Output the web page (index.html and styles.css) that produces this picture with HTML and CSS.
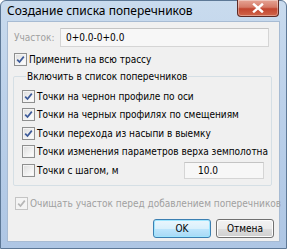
FILE: index.html
```html
<!DOCTYPE html>
<html lang="ru">
<head>
<meta charset="utf-8">
<title>Создание списка поперечников</title>
<link rel="stylesheet" href="styles.css">
</head>
<body>
<div class="window">
  <div class="titlebar">
    <span class="title">Создание списка поперечников</span>
    <div class="close">
      <svg width="12" height="10" viewBox="0 0 12 10"><path d="M2 1.5 L10 8.5 M10 1.5 L2 8.5" stroke="#fff" stroke-width="2.4" stroke-linecap="square"/></svg>
    </div>
  </div>
  <div class="client">
    <div class="field-row">
      <span class="field-label">Участок:</span>
      <div class="textbox wide">0+0.0-0+0.0</div>
    </div>
    <div class="check top-check">
      <span class="box checked"><svg width="9" height="9" viewBox="0 0 9 9"><path d="M1.2 4.6 L3.5 7 L7.8 1.6" fill="none" stroke="#3c5a99" stroke-width="1.7"/></svg></span>
      <span>Применить на всю трассу</span>
    </div>
    <fieldset class="group">
      <legend>Включить в список поперечников</legend>
      <div class="check item">
        <span class="box checked"><svg width="9" height="9" viewBox="0 0 9 9"><path d="M1.2 4.6 L3.5 7 L7.8 1.6" fill="none" stroke="#3c5a99" stroke-width="1.7"/></svg></span>
        <span>Точки на чернон профиле по оси</span>
      </div>
      <div class="check item">
        <span class="box checked"><svg width="9" height="9" viewBox="0 0 9 9"><path d="M1.2 4.6 L3.5 7 L7.8 1.6" fill="none" stroke="#3c5a99" stroke-width="1.7"/></svg></span>
        <span>Точки на черных профилях по смещениям</span>
      </div>
      <div class="check item">
        <span class="box checked"><svg width="9" height="9" viewBox="0 0 9 9"><path d="M1.2 4.6 L3.5 7 L7.8 1.6" fill="none" stroke="#3c5a99" stroke-width="1.7"/></svg></span>
        <span>Точки перехода из насыпи в выемку</span>
      </div>
      <div class="check item">
        <span class="box"></span>
        <span>Точки изменения параметров верха земполотна</span>
      </div>
      <div class="check item step-row">
        <span class="box"></span>
        <span class="step-label">Точки с шагом, м</span>
        <div class="textbox step">10.0</div>
      </div>
    </fieldset>
    <div class="check disabled bottom-check">
      <span class="box checked"><svg width="9" height="9" viewBox="0 0 9 9"><path d="M1.2 4.6 L3.5 7 L7.8 1.6" fill="none" stroke="#b6b6b6" stroke-width="1.7"/></svg></span>
      <span>Очищать участок перед добавлением поперечников</span>
    </div>
    <div class="buttons">
      <button class="btn default">OK</button>
      <button class="btn">Отмена</button>
    </div>
  </div>
</div>
</body>
</html>
```

FILE: styles.css
```css
html, body {
  margin: 0;
  padding: 0;
  width: 287px;
  height: 249px;
  overflow: hidden;
  background: #fff;
}

.window {
  width: 287px;
  height: 249px;
  box-sizing: border-box;
  background: linear-gradient(180deg, #c9dbee 0%, #bcd1ea 40%, #aec6e4 100%);
  border: 1px solid #5d7896;
  border-radius: 6px 6px 0 0;
  padding: 0 6px 6px 6px;
  display: flex;
  flex-direction: column;
}

.titlebar {
  height: 20px;
  display: flex;
  align-items: flex-start;
  justify-content: space-between;
  flex-shrink: 0;
}

.title {
  font-family: "Noto Sans", sans-serif;
  font-size: 12px;
  color: #000;
  margin-top: 2px;
  line-height: 16px;
}

.close {
  width: 42px;
  height: 17px;
  margin-top: -1px;
  margin-right: 1px;
  border: 1px solid #5e2a25;
  border-top: none;
  border-radius: 0 0 4px 4px;
  box-sizing: border-box;
  background: linear-gradient(180deg, #e6a495 0%, #d57a67 45%, #c2452f 55%, #d0654a 100%);
  display: flex;
  align-items: center;
  justify-content: center;
  box-shadow: inset 0 0 0 1px rgba(255,255,255,0.35);
}

.client {
  flex: 1;
  background: #f0f0f0;
  border: 1px solid #a7bbd3;
  font-family: "DejaVu Sans Condensed", "DejaVu Sans", "Liberation Sans", sans-serif;
  font-stretch: condensed;
  font-size: 10px;
  color: #000;
  white-space: nowrap;
  display: flex;
  flex-direction: column;
  padding: 6px 5px 0 6px;
}

.field-row {
  display: flex;
  align-items: center;
  height: 19px;
}

.field-label {
  color: #a0a0a0;
  width: 46px;
}

.textbox {
  box-sizing: border-box;
  border: 1px solid #d5d5d5;
  border-top-color: #c4c4c4;
  background: #f7f7f7;
  height: 19px;
  line-height: 17px;
  padding-left: 5px;
  color: #000;
}

.textbox.wide {
  width: 209px;
}

.check {
  display: flex;
  align-items: center;
  gap: 2px;
  height: 13px;
}

.top-check {
  margin-top: 6px;
}

.box {
  width: 13px;
  height: 13px;
  box-sizing: border-box;
  border: 1px solid #8e8f8f;
  background: linear-gradient(135deg, #dcdcdc 0%, #f6f6f6 70%, #ffffff 100%);
  box-shadow: inset 0 0 0 1px #f4f4f4;
  display: flex;
  align-items: center;
  justify-content: center;
  flex-shrink: 0;
}

.group {
  margin: 4px 0 0 -1px;
  padding: 4px 0 0 8px;
  border: 1px solid #d5dfe5;
  border-radius: 2px;
  width: 259px;
  height: 116px;
  box-sizing: border-box;
}

.group legend {
  padding: 0 1px;
  margin-left: 4px;
  line-height: 13px;
}

.item {
  height: 18.5px;
}

.step-row .step-label {
  flex: 1;
}

.textbox.step {
  width: 80px;
  height: 17px;
  line-height: 15px;
  padding-left: 13px;
  margin-right: 7px;
}

.disabled {
  color: #a0a0a0;
}

.disabled .box {
  border-color: #c4c4c4;
  background: #f4f4f4;
}

.bottom-check {
  margin-top: 11px;
  margin-left: 1px;
}

.buttons {
  display: flex;
  justify-content: flex-end;
  gap: 5px;
  margin-top: 9px;
}

.btn {
  font-family: "DejaVu Sans Condensed", "DejaVu Sans", "Liberation Sans", sans-serif;
  font-stretch: condensed;
  font-size: 10px;
  height: 19px;
  width: 58px;
  border: 1px solid #707070;
  border-radius: 3px;
  background: linear-gradient(180deg, #f2f2f2 0%, #ebebeb 50%, #dddddd 51%, #cfcfcf 100%);
  box-shadow: inset 0 0 0 1px #fcfcfc;
  padding: 0;
  color: #000;
}

.btn.default {
  border-color: #3c7fb1;
  background: linear-gradient(180deg, #eaf6fd 0%, #d9f0fc 50%, #bee6fd 51%, #a7d9f5 100%);
  box-shadow: inset 0 0 0 1px #9ee6ff;
}
```
